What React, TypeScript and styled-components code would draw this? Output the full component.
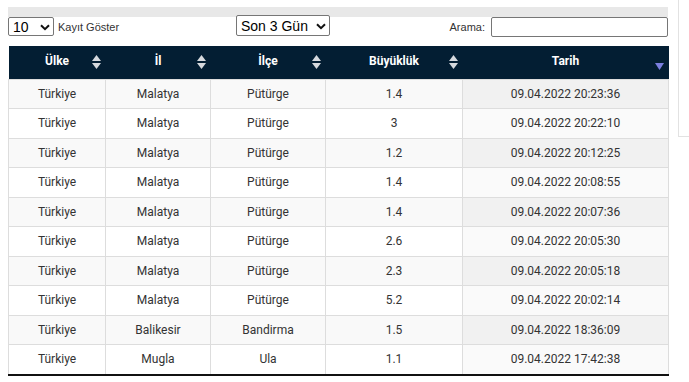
import styled, { createGlobalStyle } from "styled-components";

type TQuake = {
  country: string;
  city: string;
  district: string;
  magnitude: string;
  date: string;
};

const quakes: Array<TQuake> = [
  { country: "Türkiye", city: "Malatya", district: "Pütürge", magnitude: "1.4", date: "09.04.2022 20:23:36" },
  { country: "Türkiye", city: "Malatya", district: "Pütürge", magnitude: "3", date: "09.04.2022 20:22:10" },
  { country: "Türkiye", city: "Malatya", district: "Pütürge", magnitude: "1.2", date: "09.04.2022 20:12:25" },
  { country: "Türkiye", city: "Malatya", district: "Pütürge", magnitude: "1.4", date: "09.04.2022 20:08:55" },
  { country: "Türkiye", city: "Malatya", district: "Pütürge", magnitude: "1.4", date: "09.04.2022 20:07:36" },
  { country: "Türkiye", city: "Malatya", district: "Pütürge", magnitude: "2.6", date: "09.04.2022 20:05:30" },
  { country: "Türkiye", city: "Malatya", district: "Pütürge", magnitude: "2.3", date: "09.04.2022 20:05:18" },
  { country: "Türkiye", city: "Malatya", district: "Pütürge", magnitude: "5.2", date: "09.04.2022 20:02:14" },
  { country: "Türkiye", city: "Balikesir", district: "Bandirma", magnitude: "1.5", date: "09.04.2022 18:36:09" },
  { country: "Türkiye", city: "Mugla", district: "Ula", magnitude: "1.1", date: "09.04.2022 17:42:38" },
];

const columns = [
  { title: "Ülke", width: 97, sort: "both" },
  { title: "İl", width: 105, sort: "both" },
  { title: "İlçe", width: 115, sort: "both" },
  { title: "Büyüklük", width: 137, sort: "both" },
  { title: "Tarih", width: 206, sort: "desc" },
];

const GlobalStyle = createGlobalStyle`
  html, body {
    margin: 0;
    padding: 0;
    background: #fff;
    overflow: hidden;
    font-family: Roboto, "Liberation Sans", Arial, sans-serif;
  }
`;

const Chevron = () => (
  <ChevronIcon width="10" height="7" viewBox="0 0 10 7">
    <path d="M1 1.2 L5 5.2 L9 1.2" fill="none" stroke="#111" strokeWidth="2" />
  </ChevronIcon>
);

export default function App(): JSX.Element {
  return (
    <Page>
      <GlobalStyle />
      <Main>
        <TopBar />
        {/* controls above the table */}
        <Controls>
          <LengthBox>
            <SelectWrap>
              <Select defaultValue="10" $width={46} $height={19}>
                <option value="10">10</option>
                <option value="25">25</option>
                <option value="50">50</option>
              </Select>
              <Chevron />
            </SelectWrap>
            <Label>Kayıt Göster</Label>
          </LengthBox>
          <SelectWrap $raise>
            <Select defaultValue="3" $width={94} $height={21}>
              <option value="1">Son 1 Gün</option>
              <option value="3">Son 3 Gün</option>
              <option value="7">Son 7 Gün</option>
            </Select>
            <Chevron />
          </SelectWrap>
          <SearchBox>
            <Label>Arama:</Label>
            <SearchInput type="text" />
          </SearchBox>
        </Controls>

        <Table>
          <colgroup>
            {columns.map((c, i) => (
              <col key={String(i)} style={{ width: c.width }} />
            ))}
          </colgroup>
          <thead>
            <tr>
              {columns.map((c, i) => (
                <Th key={String(i)}>
                  {c.title}
                  {c.sort === "both" ? (
                    <SortIcon $top={9}>
                      <svg width="9" height="14" viewBox="0 0 9 14">
                        <path d="M4.5 0 L9 6 L0 6 Z" fill="#d6d9dd" />
                        <path d="M0 8 L9 8 L4.5 14 Z" fill="#d6d9dd" />
                      </svg>
                    </SortIcon>
                  ) : (
                    <SortIcon $top={17}>
                      <svg width="9" height="7" viewBox="0 0 9 7">
                        <path d="M0 0 L9 0 L4.5 7 Z" fill="#7b7fe0" />
                      </svg>
                    </SortIcon>
                  )}
                </Th>
              ))}
            </tr>
          </thead>
          <tbody>
            {quakes.map((q, i) => (
              <Row key={String(i)} $odd={i % 2 === 0}>
                <Td>{q.country}</Td>
                <Td>{q.city}</Td>
                <Td>{q.district}</Td>
                <Td>{q.magnitude}</Td>
                <Td>{q.date}</Td>
              </Row>
            ))}
          </tbody>
        </Table>
      </Main>
      <SideBox />
    </Page>
  );
}

const Page = styled.div`
  display: flex;
  align-items: flex-start;
  width: 100%;
`;

const Main = styled.div`
  width: 660px;
  flex-shrink: 0;
  padding: 7px 0 0 8px;
`;

const TopBar = styled.div`
  height: 10px;
  background: #e8e8e8;
`;

const Controls = styled.div`
  display: flex;
  align-items: flex-start;
  height: 29px;
`;

const LengthBox = styled.div`
  display: flex;
  align-items: center;
  gap: 4px;
  width: 228px;
`;

const SelectWrap = styled.div<{ $raise?: boolean }>`
  position: relative;
  display: flex;
  margin-top: ${(p) => (p.$raise ? -2 : 0)}px;
`;

const Select = styled.select<{ $width: number; $height: number }>`
  appearance: none;
  width: ${(p) => p.$width}px;
  height: ${(p) => p.$height}px;
  box-sizing: border-box;
  font-family: Arial, "Liberation Sans", sans-serif;
  font-size: 14px;
  line-height: 1;
  color: #000;
  background: #fff;
  border: 1px solid #767676;
  border-radius: 2px;
  padding: 0 0 0 4px;
  outline: none;
`;

const ChevronIcon = styled.svg`
  position: absolute;
  right: 4px;
  top: 50%;
  margin-top: -3px;
  pointer-events: none;
`;

const Label = styled.span`
  font-family: "Liberation Sans", Arial, sans-serif;
  font-size: 11px;
  color: #333;
`;

const SearchBox = styled.div`
  display: flex;
  align-items: center;
  gap: 6px;
  margin-left: auto;
`;

const SearchInput = styled.input`
  width: 177px;
  height: 20px;
  box-sizing: border-box;
  border: 1px solid #767676;
  border-radius: 2px;
  padding: 0 4px;
`;

const Table = styled.table`
  width: 660px;
  border-collapse: collapse;
  table-layout: fixed;
  border-bottom: 2px solid #111;
`;

const Th = styled.th`
  position: relative;
  height: 33px;
  box-sizing: border-box;
  padding: 0 0 2px;
  background: #031e33;
  color: #fff;
  font-family: Roboto, "Liberation Sans", Arial, sans-serif;
  font-size: 12px;
  font-weight: 700;
  text-align: center;
`;

const SortIcon = styled.span<{ $top: number }>`
  position: absolute;
  right: 5px;
  top: ${(p) => p.$top}px;
  svg {
    display: block;
  }
`;

const Row = styled.tr<{ $odd: boolean }>`
  background: ${(p) => (p.$odd ? "#f9f9f9" : "#fff")};
  td:last-child {
    background: ${(p) => (p.$odd ? "#f1f1f1" : "#fafafa")};
  }
`;

const Td = styled.td`
  height: 28.5px;
  padding: 0;
  border: 1px solid #dddddd;
  text-align: center;
  font-family: Roboto, "Liberation Sans", Arial, sans-serif;
  font-size: 12px;
  color: #333;
`;

const SideBox = styled.div`
  flex: 1;
  margin-left: 10px;
  height: 136px;
  border-left: 1px solid #e2e2e2;
  border-bottom: 1px solid #e2e2e2;
`;
